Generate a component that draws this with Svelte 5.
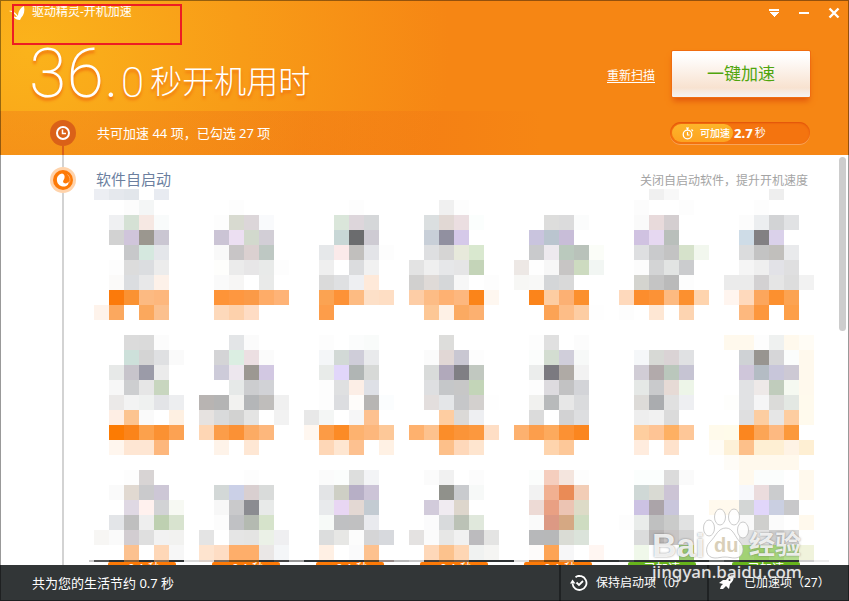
<script>
  // Each item is a 7 x 9 block of cells; rows are separated by "/", "." leaves a cell empty.
  const items = [
    '. . fcfcfc f4f6f6/. eff0f2 d5e1d5 f6e8e3 f9fbfb/. d2d2d2 d0c5db 9b978f cac6d2/. . c7c8ca d5e8df e4e6ea/. fdfdfd dcdcdc dbdde0 ececec/. fbfaf9 dbdde0 e8e8e9 fdf1e9/. fb7a0b fa9232 fcba82 fdb77d/fef3eb fba85f . fba85d fbc08e',
    '. . fdfdfd/. fdfdfd d8dad0 dcd6d9 f9fafc/. cbc4d5 ecdff2 d2d9cd d2ced6/. f9f9f9 c8c5c6 dbd0d0 bec8c3/. fefefc ebebeb e7e6e7 e8eae9 fdfdfd/. fafafa f7f6f5 . e9eae9/. fe9438 fe9740 fb9a47 feac68 feb377/. fdd9bb fdd1ac fedcc4',
    '. . . fdfdfd/. . dae6da ddd6db d5d7d9/. . c8d7d6 6b6c6e cecbd3/. e6e8ea fbeaea c1bfbd e3e4e8 fdfdfd/. efefef . dbdcde f1f1f1/. dadada dfe0e2 eeeff2 fee9d9/. fba352 fd9237 fdbb82 fde0c8 fedec4/. fd9d4a',
    '. . f0f0f0 fdfdfd/. dbdfe0 e1d8d4 ebdee1 fbfefd/. c8cfd8 9190a0 d5c9e9/. dedfe1 d6d5d4 e7e9db d9e8cf/e3e3e3 efefef e6e7e9 e5e5e6 c4d4b8/d1d0cf dfdad7 d5d7d9 f7f7f7 . fdfdfd/fdcda6 fdbc85 feb172 fdb77e fb8419 fef7f0/. fdc795 fef1e6 fbaa62 fcb070',
    './. . dddddc dbdbdc fbfcfc/. c9c4de bac5cf c8bdd8/. c9cacc ede9ee bac9bd b9c2ba fbfdf8/ede8e5 fefefe f7f7f7 c7c5c4 cddbc0 f2f6f3/f7f7f5 f8f8f7 d4d6d8 d9d9d9/. fb841b fdcda2 fcb073 fc902e/. . fca355 fdbd87 fdcda3 fefefe',
    '. fcfcfc . . fdfdfd/. fafafa e8dadb d4ced0/. d0c2e1 e6d8f1 b9bfbb/. dedfe1 c9cacc c3c3c3 d6e2cb f2f7ee/. fcfcfc d3d4d5 e2e4e3 cbccce/. d4d4cf c4c4c4 bababa fdfdfd/fed9bc fc8d2d fc9236 fdba81 fc902f fed4ae/fdfdfd . fee7d4 . fdd4b1',
    '. . fdfdfd/. fcfcfc eceef0 d2d3d5 e1e2e4/. cedce7 828083 dad1ea/. dbdcdd c3c3c3 c1bfbc e9eaec/. f5f5f5 efefef e2e2e7 dfdfe0/ebebeb ebebeb d3d1d2 e5e5e5 dddddd f2f2f2/fff5ef fed9bc fca65c fc902f fca351/. fdb87e fd973d . fd9f48',
    '. . dbdbdb dadada fcfcfc/. . cde0da d4d4d4 dfe0e2 fafafa/. e7e9e8 c7c4cb 9b9ba8 ebebeb/. f7f7f7 cdced0 e6e6e6 c8d6bf/. ebe9e8 f3f3f3 eff1f0 e3e4e7 edeef0/. feeee4 fcc490 fafafa . fef0e2/. fc7b03 fb841a fca14c fb9132 fca253/. fff6ee fee6d3 fee6d3 fdb77d',
    '. . e3e5e7 fbfbfb/. d4d4d6 dbeee2 ecdfe2 fbfbfb/. cdcbd9 ede7ee 9c9892 d2c8e2/. . e6e9e8 cccdcf d1d2d6/b8b4b2 b4b4b4 f2f2f0 b4b6b8 bfbdbb f0f0f0/e6e2e0 d9dadb d2d2d1 e4e4e3 . f2f2f2/fed6b4 fc9d49 fb9135 fcab64 fdb77c/. fef3e9 . fee7d4',
    '. fdfdfd . fbfcfc f9fbfa/. f4f6f8 d2d9d6 cfcdd9 e9eaec/. e8ebe9 e1d6fa b0b5b4 d7d9d7/. fdfdfd dfe0e1 fceee6 dee0e6/. fdfdfd dcdde0 fefcfa b7b5b3 fbfdfe/e8e8e8 f4f6f5 . f6f6f7 fdc190/fff7f0 fc9b45 fc8b26 fdb26f fdb77c fdc898/. fed7b7 fee6d1 fdc190 . fff1e4',
    '. . dddddb/. fbfbfb e1d7d5 c9c7d2 fdfdfd/. d9dbda b1a9bb 807f84 c1c8c0/. dedfe1 c5c7c9 c7c7c7 c3d5b8/. e3dedd e4e6e8 c6c7c9 d3d0ce fefefe/. . fecda1 dbd9d7 eeeff2/feb16e fdc28e fb8d29 fb9438 fc983e fedec5/. . fdc08a fed8ba fee5cf',
    '. fdfdfd e0e0e0 . fcfcfc/. fbfdfc d3ddd1 d0ceda f7f9f8/. ebedec 7b7a80 afaaa5 f2f2f2/. fdfdfd dddbdf c2c2c3 d3d4d8/. f1f1ef b8babb e7e7e7 dadbdd/. dbdbdb . d2d2d3 dddee0/fdb16f fc9e4c fdaa5d fc9133 fb861f/. . fed4ad fdc899',
    './. f5f7f9 d7d9d5 dad3d5 e0e1e3/. d1cdd6 b2aaab bac7bc c6c4d3/. e5e8e6 c9cacc e6dad5 edf5e8/. dddbd8 aaacaf e0e0e0 eeeff2/. eeeeee f1f1f1 dbdbdb/. fece9f fec495 feb063 fec798 . fffaeb/. ffecde . fee2cc . . fffcf5',
    'fff9ed fff9ed fdfdfd eff1f0 fff9ed fffcf5/. cfd2d5 989590 d6d6d8 fbfdfc fff9ed/. cfc6da b4bcc4 c8c6da cdc9d4 fff9ed/. e1e2e4 eee9e8 c0ccbc f5f9f1 fff9ed/fefefc e1e2e4 f5f5f6 dbdbd9 e3e8e3 fffaed/. dfdfe0 fccda1 e6e6e6 fdcda0 fffaed/fffbea fb861f fca556 fdb981 fc993b/fdf1d8 fdc08a feefd3 feefd3 fef3e5 feefd3/fefcf7 fff9ed fff9ed fff9ed fff9ed',
    '. . fdfdfd d8d4d4/. fafafa e1d9d1 cacacc cdc7d6/. . dfd8e3 fff1ee d2d3d5 f7f9f3/. e3e5e8 bfbfbf eeeeee bed0b1 d8e3cf/f7f6f4 fafafa d2cdd1 dfdfdf f2f2f2 f2f2f0/. . fcc18f . fed7b7 f7f7f7',
    '. . . fdfdfd/. d3d8d7 cbd0e7 d9cfd0 d9dbda/. f7f7f7 c9c9cb 8b8c91 e8eae9/. fcfcfc c0c1c4 b4bab1 d6e3cb/e4e4e4 . e5e5e5 e4e4e3 ebf1e7 efeff1/fee4cf feddc4 feae6a feae6a eae7e6 f4f6f8',
    '. fbfbfb fbfdfc dddedd f3f4f6/. e3e4e6 cecfc5 b7afc6 ccc4d7/. e8eaec e8d6f3 e3d8d3 c3cbd2/. f7faf8 bfc0c2 c0c0c1 e9eaee/. dcdddd e7e7e5 fcfcfc d5d5d6 d7d9dd/. fff0e4 . fafafb fdc18e',
    '. fbfbfb f1f1f1 . fcfcfc/. . 90918b c9cbce f7f9f8/. d2cbdb f0ebf1 ddd6cc/. fbfbfc d8dadc bbc2b6 e0e8dc/e4e2e1 fbfbfb e7e7e6 f1f1f1 bcbbbe e4e4e3/. fed8b9 fcc28d fed6b4 f0f2f1 f5f5f3',
    '. fbfdfc f5cebe f4e5de fdfdfd/. f2f2f2 f1b091 ea8b56 f2cdb6/. eddad5 e9a083 ecc4b3 dddbc7/. fafafa dc9984 d5a883 cedcc1/. b7b8ba b7b8b9 dadcd5 dbe3da/. fdfbfa fda455 f7f7f8 . fff6f2',
    '. fbfefd fbfefd dbdbdb fafafa/. cfd8d6 d9dad3 ccc4d5/. ccc2e3 aba4a9 c9c6dc . . fff9ed/fdfdfd e9ecea bfc0c0 cacbca e1e2e2/. dbdcdc b8b5b5 c8c5c5 d3d3d3/. f0f8ea . . 9acb70',
    '. fff9ed fbfdfc fbfdfc . fff9ed/. f7f8fb ebdcdd cbccce . fff9ed/fff9ed d3d6d5 e1d6fa cacfe1 c8c8ca/. f9f9f9 cfcfcd fbfbfb . fff9ed/. e0e0e0 e4e4e4 cfcfcf d8d8d8/. a2d274 9cd069 a6d67c b4dd90 f0f3dc'
  ].map((text) =>
    text.split('/').flatMap((row, y) =>
      row.split(' ').flatMap((color, x) => (color === '.' ? [] : [{ x: x * 15, y: y * 15, color: '#' + color }]))
    )
  );

  const caps = [[0, 'eceef3'], [15, 'e5e8ed'], [30, 'e2e6eb'], [60, 'e8ebf1'], [555, 'f0f0f0'], [570, 'f8f8f8'], [675, 'eeeeee']];

  const d = '2f3334';
  const edge = ['555555', d, '8a6038', d, '8a7058', d, 'dadada', 'dcd0c8', '7c6c60', '80501e', '80501e', d, '444444', '999999', d, d, d, d, '5c4428', '968a88', 'b8b8b8', 'c8c8c8', '4a4038', '6f5034', '705a48', d, d, d, 'dddddd', 'c0681a', '80460e', 'd89050', d, d, d, '44484a', d, d, d, d, d, '66696a', '44484a', d, d, d, d, 'cfcfcf', 'ececec'];

  const tags = [1, 1, 1, 1, 1, 0, 0];
</script>

<div class="window">
  <header>
    <div class="titlebar">
      <svg class="logo" width="18" height="16" viewBox="0 0 18 16" aria-hidden="true">
        <path d="M0 6c3-1 6 1 9 5 0-4 2-8 6-10 1 5 0 9-3 12l-1 2c-3 0-5-1-7-4 2 1 3 1 4 1-2-3-4-5-8-6z" fill="#fff" />
      </svg>
      <h1>驱动精灵-开机加速</h1>
      <div class="controls">
        <button aria-label="菜单"><svg width="12" height="12" viewBox="0 0 12 12" shape-rendering="crispEdges"><path d="M1 2h10v2H1zM1 5h10L6 10z" fill="#fff" /></svg></button>
        <button aria-label="最小化"><svg width="12" height="12" viewBox="0 0 12 12"><path d="M1 5h10v2H1z" fill="#fff" /></svg></button>
        <button aria-label="关闭"><svg width="12" height="12" viewBox="0 0 12 12"><path d="M1.500 1.500l9 9M10.500 1.500l-9 9" stroke="#fff" stroke-width="2.400" /></svg></button>
      </div>
      <div class="marker"></div>
    </div>

    <div class="summary">
      <p class="time">
        <span class="digits"><span>36.</span><small>0</small></span>
        <span class="unit">秒开机用时</span>
      </p>
      <a href="#rescan">重新扫描</a>
      <button class="boost">一键加速</button>
    </div>

    <div class="status">
      <div class="rail">
        <svg width="26" height="26" viewBox="0 0 26 26" aria-hidden="true">
          <circle cx="13" cy="13" r="13" fill="#da6118" />
          <circle cx="13" cy="13" r="6" fill="none" stroke="#fff" stroke-width="2" />
          <path d="M12.500 9.500v4h3.500" fill="none" stroke="#fff" stroke-width="1.500" />
        </svg>
        <span></span>
      </div>
      <p>共可加速 44 项，已勾选 27 项</p>
      <div class="pill">
        <div class="fill">
          <svg width="12" height="13" viewBox="0 0 12 13" aria-hidden="true">
            <circle cx="5.500" cy="7.500" r="4.300" fill="none" stroke="#fff" stroke-width="1.300" />
            <path d="M4 1h3M5.500 1v2M5.500 5v3h2M9.500 2.500l1.500 1.500" fill="none" stroke="#fff" stroke-width="1.200" />
          </svg>
          可加速
        </div>
        <b>2.7</b><span>秒</span>
      </div>
    </div>
  </header>

  <main>
    <div class="rail">
      <i></i>
      <svg width="26" height="26" viewBox="0 0 26 26" aria-hidden="true">
        <circle cx="13" cy="13" r="13" fill="#ffd3ab" />
        <circle cx="13" cy="13" r="10" fill="#fd7a07" />
        <path d="M12 6.500c-4 1-5.500 4-5 7.500.6 4 4.500 6 8 5.500 2.500-.5 4-2.500 3.500-5-1 2-3 2.500-4.500 1.500-2-1.500 0-3 .5-5 .5-2.500-.5-4-2.500-4.500z" fill="#fff" />
        <path d="M17.500 7.500c2.500 2 3 5 2 8" fill="none" stroke="#ffad68" />
      </svg>
      <span></span>
    </div>
    <section>
      <div class="heading">
        <h2>软件自启动</h2>
        <p>关闭自启动软件，提升开机速度</p>
      </div>
      <svg width="735" height="11" aria-hidden="true">
        {#each caps as [x, color]}<rect {x} width="15" height="11" fill={'#' + color} />{/each}
      </svg>
      <ul>
        {#each items as cells}
          <li>
            <svg width="105" height="135" shape-rendering="crispEdges" aria-hidden="true">
              {#each cells as c}<rect x={c.x} y={c.y} width="15" height="15" fill={c.color} />{/each}
            </svg>
          </li>
        {/each}
      </ul>
    </section>
    <div class="scroll"></div>
    <div class="next">
      <svg width="740" height="2" shape-rendering="crispEdges" aria-hidden="true">
        <rect width="5" height="2" fill="#c8c8c8" />
        {#each edge as color, i}<rect x={5 + i * 15} width="15" height="2" fill={'#' + color} />{/each}
      </svg>
      <div class="tags">
        {#each tags as pending}
          <span class:done={!pending}>{pending ? '0.1 秒 ×' : '已加速'}</span>
        {/each}
      </div>
    </div>
  </main>

  <footer>
    <p>共为您的生活节约 0.7 秒</p>
    <button class="keep">
      <svg width="18" height="18" viewBox="0 0 18 18" aria-hidden="true">
        <path d="M2.500 9.500a7 7 0 1 0 3-6.300M8 2a7 7 0 0 1 2 0" fill="none" stroke="#fff" stroke-width="1.800" />
        <path d="M0 9.500l2.500-4 3 4z" fill="#fff" />
        <path d="M6.500 8.500l2.500 2.500 4-4" fill="none" stroke="#fff" stroke-width="1.800" />
      </svg>
      保持启动项（0）
    </button>
    <button class="boosted">
      <svg width="16" height="16" viewBox="0 0 16 16" aria-hidden="true">
        <path d="M15 0c0 4-1 6-4 9l-1 5-3-3-3 3H1l1-3 2-2-4-1 4-3h3c2-3 4-5 8-5z" fill="#fff" />
        <circle cx="10.500" cy="5" r="1" fill="#323637" />
      </svg>
      已加速项（27）
    </button>
  </footer>

  <div class="watermark">
    <div class="brand">
      <span>Bai</span>
      <div class="paw">
        <svg width="46" height="54" viewBox="0 0 46 54" aria-hidden="true">
          <g fill="#fff" fill-opacity="0.85" stroke="#aaa" stroke-opacity="0.6">
            <ellipse cx="6" cy="20" rx="5.500" ry="8" />
            <ellipse cx="17" cy="9" rx="5.500" ry="8" />
            <ellipse cx="31" cy="9" rx="5.500" ry="8" />
            <ellipse cx="40" cy="22" rx="5.500" ry="8" />
            <path d="M23 20c7 0 9 9 14 14s4 16-5 16c-4 0-6-1-10-1s-6 1-10 1c-9 0-11-10-5-16s8-14 16-14z" />
          </g>
        </svg>
        <em>du</em>
      </div>
      <span class="cn">经验</span>
    </div>
    <div class="site">jingyan.baidu.com</div>
  </div>
</div>

<style>
  :global(body) { background: #fff; }
  .window {
    position: relative;
    box-sizing: border-box;
    display: flex;
    flex-direction: column;
    height: 100vh;
    min-height: 400px;
    overflow: hidden;
    font: 13px/18px "Noto Sans", "Noto Sans CJK SC", sans-serif;
    color: #fff;
  }
  .window::after {
    content: "";
    position: absolute;
    inset: 0;
    border: 1px solid rgba(0, 0, 0, 0.4);
    pointer-events: none;
  }
  h1, h2, p, ul { margin: 0; padding: 0; font-weight: 400; }
  button { border: 0; padding: 0; background: none; color: inherit; font: inherit; cursor: pointer; }
  svg { display: block; flex: none; }

  header {
    flex: none;
    background: radial-gradient(ellipse 420px 360px at 30px 50px, #fbb31b, #f89c17 50%, #f68614);
  }
  .titlebar { position: relative; display: flex; align-items: center; height: 26px; padding: 0 9px; }
  h1 { flex: 1; height: 26px; margin-left: 5px; font-size: 12px; line-height: 24px; }
  .controls { display: flex; gap: 18px; }
  .marker { position: absolute; left: 12px; top: 4px; width: 166px; height: 37px; border: 2px solid #ed1c24; }

  .summary { display: flex; height: 85px; padding: 0 38px 0 29px; }
  .time {
    flex: 1;
    display: flex;
    align-items: flex-end;
    height: 74px;
    margin-top: 11px;
    text-shadow: 0 3px 3px #f0700f;
    white-space: nowrap;
  }
  .digits { display: flex; align-items: baseline; font-family: Roboto, sans-serif; font-weight: 200; font-size: 68px; line-height: 74px; }
  .digits small { margin-left: 2px; font-size: 42px; line-height: 42px; }
  .unit { margin-left: 6px; font-family: "Noto Sans CJK SC", sans-serif; font-weight: 200; font-size: 32px; line-height: 64px; }
  .summary a { align-self: flex-start; margin-top: 41px; color: #fff; font-size: 12px; text-underline-offset: 2px; }
  .boost {
    width: 140px;
    height: 48px;
    margin: 24px 0 0 16px;
    border: 1px solid #f06d10;
    border-radius: 2px;
    background: linear-gradient(#fff 10%, #f8e2d0 80%, #f4f4f4);
    box-shadow: 0 5px 6px -2px #e2570c;
    color: #4fa50d;
    font-size: 17px;
  }

  .status {
    display: flex;
    align-items: center;
    height: 44px;
    padding: 0 39px 0 50px;
    background: linear-gradient(90deg, rgba(232, 80, 20, 0.22), rgba(232, 80, 20, 0.22) 36%, rgba(232, 80, 20, 0) 64%);
  }
  .rail { display: flex; flex-direction: column; align-items: center; flex: none; align-self: stretch; width: 26px; }
  .rail i { width: 2px; height: 12px; background: #d3d3d3; }
  .rail span { flex: 1; width: 2px; background: #d3d3d3; }
  .status .rail { padding-top: 9px; }
  .status .rail span { background: #da6118; }
  .status p { flex: 1; margin-left: 21px; }
  .pill {
    box-sizing: border-box;
    display: flex;
    align-items: center;
    width: 140px;
    height: 22px;
    padding: 2px;
    border-radius: 11px;
    background: #f4740f;
    box-shadow: inset 0 1px 2px #e04f0a, 0 1px 0 #f9a45a;
    font-size: 11px;
  }
  .fill {
    box-sizing: border-box;
    display: flex;
    align-items: center;
    gap: 6px;
    width: 61px;
    height: 18px;
    padding-left: 10px;
    border-radius: 9px;
    background: linear-gradient(#fdb52a, #fda321);
    font-size: 10px;
    font-weight: 500;
    white-space: nowrap;
  }
  .pill b { margin: 0 2px 0 1px; font-size: 13px; font-weight: 800; }

  main { position: relative; flex: 1; min-height: 0; display: flex; padding-left: 50px; background: #fff; overflow: hidden; }
  section { flex: 1; min-width: 0; margin-right: -10px; padding-left: 18px; }
  .heading { display: flex; justify-content: space-between; align-items: center; height: 21px; padding: 13px 41px 0 2px; }
  .heading h2 { font-size: 15px; line-height: 24px; color: #6c7f9f; }
  .heading p { padding-top: 4px; font-size: 12px; color: #a4a4a4; }
  ul { display: flex; flex-wrap: wrap; list-style: none; }
  .scroll { flex: none; width: 7px; height: 174px; margin: 2px 3px 0 0; border-radius: 4px; background: #cdcdcd; }
  .next { position: absolute; left: 89px; right: 0; bottom: 0; height: 5px; overflow: hidden; background: #fff; }
  .tags { display: flex; gap: 36px; padding-left: 19px; }
  .tags span {
    box-sizing: border-box;
    flex: none;
    width: 68px;
    height: 14px;
    padding-right: 6px;
    border-radius: 2px;
    background: #fd7a07;
    font-size: 12px;
    line-height: 14px;
    text-align: right;
  }
  .tags .done { padding: 0; background: #67b41c; text-align: center; }

  footer { flex: none; display: flex; align-items: center; height: 36px; background: #323637; }
  footer p { flex: 1; padding-left: 32px; }
  footer button {
    display: flex;
    align-items: center;
    box-sizing: border-box;
    height: 36px;
    border-left: 2px solid #1f2223;
    font-size: 12px;
    white-space: nowrap;
  }
  .keep { width: 148px; padding-left: 9px; gap: 8px; }
  .boosted { width: 142px; padding-left: 10px; gap: 9px; }

  .watermark {
    position: absolute;
    right: 42px;
    bottom: 19px;
    width: 155px;
    pointer-events: none;
    color: rgba(255, 255, 255, 0.85);
    text-shadow: 0 0 2px rgba(90, 90, 90, 0.7);
    font-family: "Liberation Sans", "Noto Sans CJK SC", sans-serif;
    font-weight: 700;
  }
  .brand { display: flex; align-items: flex-end; height: 54px; font-size: 34px; line-height: 34px; }
  .paw { position: relative; flex: none; margin-left: -2px; }
  .paw em { position: absolute; left: 11px; top: 25px; font-size: 20px; line-height: 24px; font-style: normal; color: #d9cfb8; text-shadow: none; }
  .cn { font-size: 26px; }
  .site { font-family: "Noto Sans", sans-serif; font-size: 17px; line-height: 20px; font-weight: 500; white-space: nowrap; }
</style>
